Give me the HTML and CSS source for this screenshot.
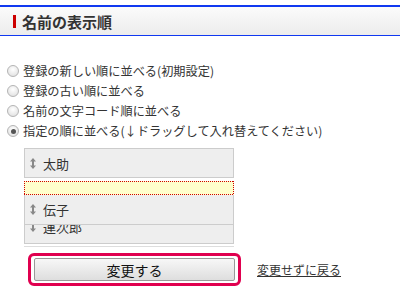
FILE: index.html
```html
<!DOCTYPE html>
<html lang="ja">
<head>
<meta charset="utf-8">
<link rel="stylesheet" href="styles.css">
</head>
<body>
<div class="header"><span class="bar"></span><h1 class="title">名前の表示順</h1></div>
<form class="options">
  <label class="opt"><span class="radio"></span>登録の新しい順に並べる(初期設定)</label>
  <label class="opt"><span class="radio"></span>登録の古い順に並べる</label>
  <label class="opt"><span class="radio"></span>名前の文字コード順に並べる</label>
  <label class="opt"><span class="radio checked"></span>指定の順に並べる(↓ドラッグして入れ替えてください)</label>
  <ul class="sort-list">
    <li class="item"><svg class="grip" width="6" height="11" viewBox="0 0 6 11"><path d="M3 0 L6 3.5 H4 V7.5 H6 L3 11 L0 7.5 H2 V3.5 H0 Z" fill="#888"/></svg>太助</li>
    <li class="placeholder"></li>
    <li class="item dragging"><svg class="grip" width="6" height="11" viewBox="0 0 6 11"><path d="M3 0 L6 3.5 H4 V7.5 H6 L3 11 L0 7.5 H2 V3.5 H0 Z" fill="#888"/></svg>伝子</li>
    <li class="item under"><svg class="grip" width="6" height="11" viewBox="0 0 6 11"><path d="M3 0 L6 3.5 H4 V7.5 H6 L3 11 L0 7.5 H2 V3.5 H0 Z" fill="#888"/></svg>運次郎</li>
  </ul>
  <div class="actions">
    <span class="btn-wrap"><button type="button" class="btn">変更する</button></span>
    <a href="#" class="back">変更せずに戻る</a>
  </div>
</form>
</body>
</html>
```
FILE: styles.css
```css
* { box-sizing: border-box; }
body {
  margin: 0;
  background: #fff;
  color: #333;
  font-family: "Noto Sans CJK JP", "Noto Sans", sans-serif;
  font-size: 12px;
}
.header {
  margin-top: 5px;
  height: 31px;
  border-top: 2px solid #1038f0;
  border-bottom: 1px solid #1038f0;
  background: linear-gradient(#fbfbfb, #ececec);
  display: flex;
  align-items: center;
  padding-left: 13px;
}
.bar {
  width: 3px;
  height: 13px;
  background: #cc0000;
  margin-right: 6px;
}
.title {
  margin: 0;
  font-size: 15px;
  font-weight: bold;
  color: #333;
  line-height: 1;
}
.options {
  margin: 25px 0 0 0;
}
.opt {
  display: flex;
  align-items: center;
  height: 20px;
  padding-left: 7px;
  line-height: 1;
  font-size: 12.2px;
}
.radio {
  width: 12px;
  height: 12px;
  border-radius: 50%;
  border: 1px solid #b4b4b4;
  background: radial-gradient(circle at 50% 35%, #fff, #dcdcdc);
  margin-right: 4px;
  position: relative;
  flex: none;
}
.radio.checked::after {
  content: "";
  position: absolute;
  left: 2.5px;
  top: 2.5px;
  width: 5px;
  height: 5px;
  border-radius: 50%;
  background: #555;
}
.sort-list {
  list-style: none;
  margin: 7px 0 0 24px;
  padding: 0 0 2px 0;
  width: 210px;
  border-bottom: 1px solid #ddd;
}
.item {
  height: 30px;
  background: #eee;
  border: 1px solid #ccc;
  display: flex;
  align-items: center;
  padding-left: 5px;
  font-size: 13px;
  color: #333;
}
.grip {
  margin-right: 7px;
  flex: none;
}
.placeholder {
  height: 14px;
  margin-top: 3px;
  background:
    repeating-linear-gradient(90deg, #d00000 0 1px, transparent 1px 2px) top / 100% 1px no-repeat,
    repeating-linear-gradient(90deg, #d00000 0 1px, transparent 1px 2px) bottom / 100% 1px no-repeat,
    repeating-linear-gradient(180deg, #d00000 0 1px, transparent 1px 2px) left / 1px 100% no-repeat,
    repeating-linear-gradient(180deg, #d00000 0 1px, transparent 1px 2px) right / 1px 100% no-repeat,
    #ffffcc;
}
.dragging {
  position: relative;
  z-index: 1;
  margin-bottom: -11px;
  border-top: none;
  height: 30px;
}
.under {
  padding-bottom: 5px;
}
.actions {
  display: flex;
  align-items: center;
  margin-top: 6px;
  padding-left: 28px;
}
.btn-wrap {
  display: block;
  border: 3px solid #e0004f;
  border-radius: 6px;
  padding: 2px 3px;
}
.btn {
  display: block;
  width: 201px;
  height: 23px;
  border: 1px solid #999;
  border-radius: 2px;
  background: linear-gradient(#f7f7f7, #dedede);
  font-family: "Noto Sans CJK JP", sans-serif;
  font-size: 14px;
  color: #111;
  padding: 0;
  line-height: 1;
}
.back {
  margin-left: 16px;
  color: #333;
  font-size: 12px;
  text-decoration: underline;
}
```
